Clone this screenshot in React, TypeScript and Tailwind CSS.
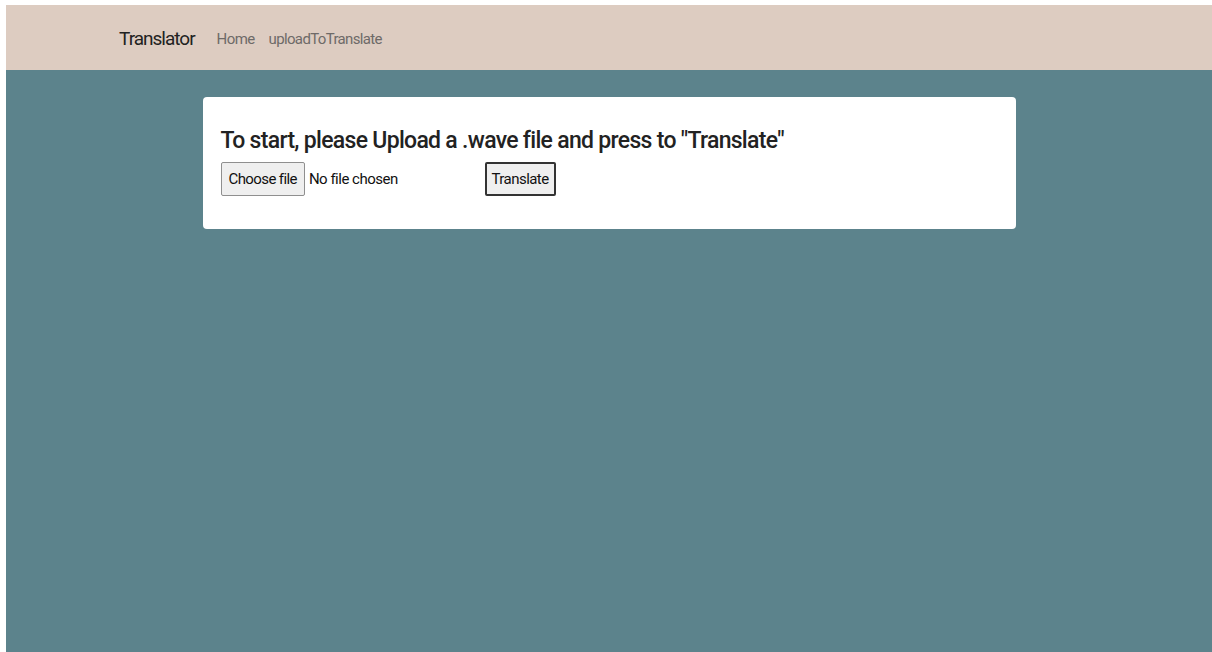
import { useState } from "react";

const font = { fontFamily: 'Roboto, "Open Sans", sans-serif' };

function NavBar() {
  return (
    <nav className="flex h-[65px] shrink-0 items-center bg-[#ddccc1]">
      <div className="mx-auto flex w-[980px] items-center pt-[4px]">
        <a href="#" className="mr-[22px] text-[19px] tracking-[-1px] text-[#222]">
          Translator
        </a>
        <a href="#" className="mr-[14px] text-[15px] tracking-[-0.6px] text-[#6e6a68]">
          Home
        </a>
        <a href="#" className="text-[15px] tracking-[-0.65px] text-[#6e6a68]">
          uploadToTranslate
        </a>
      </div>
    </nav>
  );
}

function UploadCard() {
  const [fileName, setFileName] = useState<string | null>(null);

  return (
    <div className="mx-auto w-[813px] rounded-[4px] bg-white px-[18px] pt-[28px] pb-[33px]">
      <h2 className="text-[23px] font-medium leading-[32px] tracking-[-0.7px] text-[#222]">
        To start, please Upload a .wave file and press to "Translate"
      </h2>
      <div className="mt-[5px] flex items-center">
        <label className="flex w-[264px] cursor-pointer items-center text-[15px] text-[#111]">
          <span className="flex h-[34px] items-center rounded-[2px] border border-[#8f8f8f] bg-[#efefef] px-[7px] tracking-[-0.6px]">
            Choose file
          </span>
          <span className="ml-[4px] tracking-[-0.5px]">{fileName ?? "No file chosen"}</span>
          <input
            type="file"
            accept=".wav,.wave"
            className="hidden"
            onChange={(e) => setFileName(e.target.files?.[0]?.name ?? null)}
          />
        </label>
        <button className="flex h-[34px] items-center rounded-[2px] border-2 border-[#333] bg-[#efefef] px-[5px] text-[15px] tracking-[-0.55px] text-[#111]">
          Translate
        </button>
      </div>
    </div>
  );
}

export default function App() {
  return (
    <div className="bg-white pl-[6px] pt-[5px]" style={font}>
      <div className="flex h-[647px] flex-col">
        <NavBar />
        <main className="flex-1 bg-[#5c838c] pt-[27px]">
          <UploadCard />
        </main>
      </div>
    </div>
  );
}
